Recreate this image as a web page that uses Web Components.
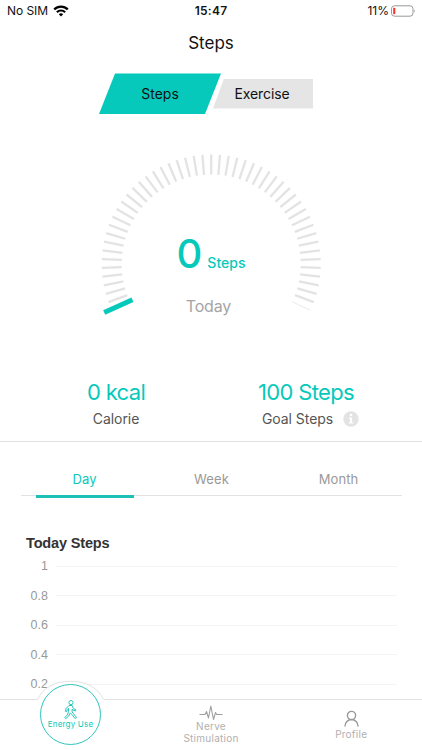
<!DOCTYPE html>
<html lang="en">
<head>
<meta charset="utf-8">
<meta name="viewport" content="width=device-width, initial-scale=1">
<title>Steps</title>
<style>
  body {
    margin: 0;
    background: #fff;
    font-family: Inter, "Liberation Sans", sans-serif;
    --teal: #07c9bb;
    --line: #e2e2e2;
  }
</style>
</head>
<body>
<steps-app></steps-app>

<script>
/**
 * Status bar - carrier, clock and battery
 */
class StatusBar extends HTMLElement {
  constructor() {
    super();
    this.attachShadow({ mode: 'open' });
  }

  connectedCallback() {
    this.shadowRoot.innerHTML = `
      <style>
        :host {
          display: grid;
          grid-template-columns: 1fr auto 1fr;
          align-items: center;
          height: 22px;
          padding: 0 6px 0 7px;
          font-size: 12px;
          line-height: 22px;
          color: #111;
        }
        .side { display: flex; align-items: center; }
        .right { justify-content: flex-end; gap: 2px; }
        .carrier { letter-spacing: -0.05px; margin-right: 5px; }
        .clock { font-weight: 600; letter-spacing: 0.25px; margin-right: 1px; }
        svg { display: block; }
      </style>
      <div class="side">
        <span class="carrier">No SIM</span>
        <svg width="16" height="12" viewBox="0 0 16 12" fill="none" stroke="#000" stroke-width="2.2">
          <path d="M1.2 4.4a9.6 9.6 0 0 1 13.6 0"/>
          <path d="M3.9 7.2a5.8 5.8 0 0 1 8.2 0"/>
          <path d="M8 11.6 5.8 9.3a3.1 3.1 0 0 1 4.4 0Z" fill="#000" stroke="none"/>
        </svg>
      </div>
      <span class="clock">15:47</span>
      <div class="side right">
        <span>11%</span>
        <svg width="25" height="12" viewBox="0 0 25 12">
          <rect x="0.5" y="0.8" width="21.5" height="10.4" rx="3" fill="#fff" stroke="#999"/>
          <rect x="2.2" y="2.7" width="2.1" height="6.6" rx="0.8" fill="#f0362f"/>
          <path d="M23.2 4.2q1.6 1.8 0 3.6z" fill="#999"/>
        </svg>
      </div>
    `;
  }
}

/**
 * Slanted Steps / Exercise switch
 */
class ModeSwitch extends HTMLElement {
  constructor() {
    super();
    this.attachShadow({ mode: 'open' });
  }

  connectedCallback() {
    this.shadowRoot.innerHTML = `
      <style>
        :host {
          display: flex;
          justify-content: center;
          align-items: center;
          height: 41px;
          font-size: 14px;
          color: #111;
          width: 412px;
        }
        div { display: flex; align-items: center; justify-content: center; }
        .active {
          width: 122px;
          height: 41px;
          background: var(--teal);
          clip-path: polygon(16px 0.5px, 100% 0.5px, 106px 100%, 0 100%);
        }
        .other {
          width: 100px;
          height: 30px;
          margin-left: -8px;
          background: #e5e5e5;
          clip-path: polygon(11px 0, 100% 0, 100% 100%, 0 100%);
        }
        .other span { letter-spacing: -0.1px; margin-right: 2px; }
      </style>
      <div class="active"><slot name="active"></slot></div>
      <div class="other"><span><slot name="other"></slot></span></div>
    `;
  }
}

/**
 * Step gauge - arc of ticks around the day's count
 */
class StepGauge extends HTMLElement {
  constructor() {
    super();
    this.attachShadow({ mode: 'open' });
  }

  connectedCallback() {
    const count = this.getAttribute('count') || '0';
    this.shadowRoot.innerHTML = `
      <style>
        :host {
          display: grid;
          justify-items: center;
          width: 240px;
          height: 180px;
        }
        svg, .readout { grid-area: 1 / 1; }
        .readout {
          display: flex;
          flex-direction: column;
          align-items: center;
          padding-top: 84px;
        }
        .value {
          display: flex;
          align-items: baseline;
          gap: 5px;
          color: var(--teal);
          line-height: 50px;
        }
        .count { font-size: 40px; font-weight: 450; }
        .unit { font-size: 14px; font-weight: 500; letter-spacing: 0; }
        .caption {
          margin: 8px 5px 0 0;
          font-size: 16px;
          line-height: 20px;
          letter-spacing: -0.15px;
          color: #a5a5a5;
        }
      </style>
      <svg width="240" height="180" viewBox="0 0 240 180">${this.ticks()}</svg>
      <div class="readout">
        <div class="value"><span class="count">${count}</span><span class="unit">Steps</span></div>
        <div class="caption"><slot></slot></div>
      </div>
    `;
  }

  ticks() {
    const cx = 120.2;
    const cy = 119;
    let out = '';
    // 230 degree sweep, the first tick is the marker
    for (let i = 0; i <= 50; i++) {
      const a = (i === 0 ? 155.6 : 155 + i * 4.6) * Math.PI / 180;
      const inner = i === 0 ? 86.5 : 89.5;
      const outer = i === 0 ? 117.5 : 109.5;
      const width = i === 0 ? 5 : i === 50 ? 0.8 : 2.3;
      const x1 = cx + inner * Math.cos(a);
      const y1 = cy + inner * Math.sin(a);
      const x2 = cx + outer * Math.cos(a);
      const y2 = cy + outer * Math.sin(a);
      out += `<line x1="${x1.toFixed(2)}" y1="${y1.toFixed(2)}" x2="${x2.toFixed(2)}" y2="${y2.toFixed(2)}"
        stroke="${i === 0 ? '#07c9bb' : '#e3e3e3'}" stroke-width="${width}"/>`;
    }
    return out;
  }
}

/**
 * One figure with its label underneath
 */
class StatFigure extends HTMLElement {
  constructor() {
    super();
    this.attachShadow({ mode: 'open' });
  }

  connectedCallback() {
    const info = this.hasAttribute('info');
    this.shadowRoot.innerHTML = `
      <style>
        :host {
          display: flex;
          flex-direction: column;
          align-items: center;
        }
        .value {
          font-size: 22px;
          line-height: 28px;
          letter-spacing: -0.65px;
          color: var(--teal);
        }
        .label {
          display: flex;
          align-items: center;
          height: 20px;
          margin-top: 3px;
          font-size: 14px;
          line-height: 18px;
          letter-spacing: -0.05px;
          color: #555;
          white-space: nowrap;
        }
        svg { margin-left: 10px; }
        .info { margin-left: 9px; }
      </style>
      <div class="value">${this.getAttribute('value') || ''}</div>
      <div class="label ${info ? 'info' : ''}">
        <slot></slot>
        ${info ? `
          <svg width="16" height="16" viewBox="0 0 16 16">
            <circle cx="8" cy="8" r="7.7" fill="#e3e3e3"/>
            <circle cx="8" cy="4" r="1.3" fill="#fff"/>
            <path d="M6 6.5h3v4.8h1.2v1.2H5.8v-1.2H7V7.7H6z" fill="#fff"/>
          </svg>
        ` : ''}
      </div>
    `;
  }
}

/**
 * Day / Week / Month tabs
 */
class PeriodTabs extends HTMLElement {
  constructor() {
    super();
    this.attachShadow({ mode: 'open' });
  }

  connectedCallback() {
    const tabs = (this.getAttribute('tabs') || '').split(',');
    this.shadowRoot.innerHTML = `
      <style>
        :host {
          display: flex;
          height: 33px;
          margin: 0 20px 0 21px;
          border-bottom: 1px solid var(--line);
          font-size: 13px;
          letter-spacing: 0.1px;
          color: #999;
        }
        .tab {
          flex: 1;
          display: flex;
          flex-direction: column;
          align-items: center;
          line-height: 30px;
          height: 36px;
          padding-top: 2px;
          box-sizing: border-box;
        }
        .tab.on { color: var(--teal); }
        .tab.on::after {
          content: "";
          flex: none;
          width: 98px;
          height: 3px;
          margin-top: 1px;
          background: #1cc0b4;
        }
      </style>
      ${tabs.map((tab, i) => `<div class="tab ${i === 0 ? 'on' : ''}">${tab}</div>`).join('')}
    `;
  }
}

/**
 * Chart grid with labels on the left
 */
class StepChart extends HTMLElement {
  constructor() {
    super();
    this.attachShadow({ mode: 'open' });
  }

  connectedCallback() {
    const labels = (this.getAttribute('labels') || '').split(',');
    this.shadowRoot.innerHTML = `
      <style>
        :host {
          display: block;
          padding: 0 25px 0 26px;
          font-family: "Liberation Sans", Arial, sans-serif;
        }
        h2 {
          margin: 0;
          font-size: 14.5px;
          line-height: 18px;
          letter-spacing: -0.15px;
          color: #333;
        }
        .row {
          display: flex;
          align-items: center;
          height: 29.5px;
          font-size: 12.5px;
          color: #999;
        }
        .row span { width: 22px; text-align: right; }
        .row i {
          flex: 1;
          height: 1px;
          margin-left: 8px;
          background: #f4f4f4;
        }
      </style>
      <h2><slot></slot></h2>
      <div class="rows">
        ${labels.map(label => `<div class="row"><span>${label}</span><i></i></div>`).join('')}
      </div>
    `;
  }
}

/**
 * Bottom navigation
 */
class NavBar extends HTMLElement {
  constructor() {
    super();
    this.attachShadow({ mode: 'open' });
  }

  connectedCallback() {
    this.shadowRoot.innerHTML = `
      <style>
        :host {
          display: flex;
          position: relative;
          height: 51px;
          box-sizing: border-box;
          border-top: 1px solid var(--line);
          background: #fff;
          font-size: 10px;
          line-height: 12px;
          letter-spacing: 0.25px;
          color: #b0b0b0;
          text-align: center;
        }
        .item {
          flex: 1;
          display: flex;
          flex-direction: column;
          align-items: center;
        }
        .nerve svg { margin-top: 4px; }
        .nerve span { margin-top: -1px; }
        .profile svg { margin-top: 10px; }
        .profile span { margin-top: 1px; margin-right: 1px; }
        svg { display: block; }
        /* raised round button over the bar's top edge */
        .halo {
          position: absolute;
          left: 34px;
          top: -20px;
        }
        .home {
          position: absolute;
          left: 40px;
          top: -16px;
          width: 61px;
          height: 61px;
          box-sizing: border-box;
          border: 1.4px solid #2cc6bc;
          border-radius: 50%;
          background: #fff;
          color: var(--teal);
          display: flex;
          flex-direction: column;
          align-items: center;
          padding-top: 15px;
          font-size: 8px;
          line-height: 9px;
          letter-spacing: 0.2px;
          white-space: nowrap;
        }
      </style>
      <svg class="halo" width="74" height="22" viewBox="0 0 74 22">
        <path d="M3.5 22V19.7C8 8 20 1.1 36.5 1.1S65.5 8 70 19.7V22z" fill="#fff"/>
        <path d="M3.5 19.5C9 8 20 1.3 36.5 1.3S64 8 69.5 19.5" fill="none" stroke="#e2e2e2"/>
      </svg>
      <div class="home">
        <svg width="14" height="20" viewBox="0 0 14 20" fill="none" stroke="#2cc6bc" stroke-width="1">
          <circle cx="7" cy="2.6" r="2.1"/>
          <path d="M5 5.5h3.2l1.2 3 2.6 1.4-.6 1.1-2.7-1.2-.4-.8-.3 3 2 2.2 2.5 3.5-1.4.9-2.7-3.5-2.2-2.2L4.8 16 1.7 18.6l-1-1.2 2.5-2.2 1.3-3.5V8.3L3.3 9.5l-.7 2.2-1.2-.3.8-3z" stroke-linejoin="round"/>
        </svg>
        <span>Energy Use</span>
      </div>
      <div class="item"></div>
      <div class="item nerve">
        <svg width="24" height="17" viewBox="0 0 24 17" fill="none" stroke="#a0a0a0" stroke-width="1.1" stroke-linejoin="round">
          <path d="M0.5 10.5H6l1.5-3 2 6.5 2.3-12 2.7 13.5L16.5 8.5l1.2 2h5.8"/>
        </svg>
        <span>Nerve<br>Stimulation</span>
      </div>
      <div class="item profile">
        <svg width="15" height="17" viewBox="0 0 15 17" fill="none" stroke="#999" stroke-width="1.4">
          <circle cx="7.5" cy="5.5" r="4.1"/>
          <path d="M0.9 16.5a6.6 7 0 0 1 13.2 0"/>
        </svg>
        <span>Profile</span>
      </div>
    `;
  }
}

/**
 * Whole screen
 */
class StepsApp extends HTMLElement {
  constructor() {
    super();
    this.attachShadow({ mode: 'open' });
  }

  connectedCallback() {
    this.shadowRoot.innerHTML = `
      <style>
        :host {
          display: flex;
          flex-direction: column;
          height: 750px;
          overflow: hidden;
        }
        main {
          flex: 1;
          min-height: 0;
          overflow: hidden;
          display: flex;
          flex-direction: column;
        }
        h1 {
          margin: 0 0 8px;
          font-size: 17px;
          font-weight: 400;
          line-height: 43px;
          text-align: center;
          color: #111;
        }
        step-gauge { margin: 31px auto 0; }
        .stats {
          display: flex;
          justify-content: space-around;
          height: 63px;
          margin-top: 53px;
          border-bottom: 1px solid var(--line);
        }
        stat-figure { flex: 1; }
        stat-figure:first-child { padding-left: 21px; }
        stat-figure:last-child { padding-right: 21px; }
        period-tabs { margin-top: 20px; }
        step-chart { margin-top: 38px; }
      </style>
      <main>
        <status-bar></status-bar>
        <h1>Steps</h1>
        <mode-switch>
          <span slot="active">Steps</span>
          <span slot="other">Exercise</span>
        </mode-switch>
        <step-gauge count="0">Today</step-gauge>
        <div class="stats">
          <stat-figure value="0 kcal">Calorie</stat-figure>
          <stat-figure value="100 Steps" info>Goal Steps</stat-figure>
        </div>
        <period-tabs tabs="Day,Week,Month"></period-tabs>
        <step-chart labels="1,0.8,0.6,0.4,0.2">Today Steps</step-chart>
      </main>
      <nav-bar></nav-bar>
    `;
  }
}

customElements.define('status-bar', StatusBar);
customElements.define('mode-switch', ModeSwitch);
customElements.define('step-gauge', StepGauge);
customElements.define('stat-figure', StatFigure);
customElements.define('period-tabs', PeriodTabs);
customElements.define('step-chart', StepChart);
customElements.define('nav-bar', NavBar);
customElements.define('steps-app', StepsApp);
</script>
</body>
</html>
